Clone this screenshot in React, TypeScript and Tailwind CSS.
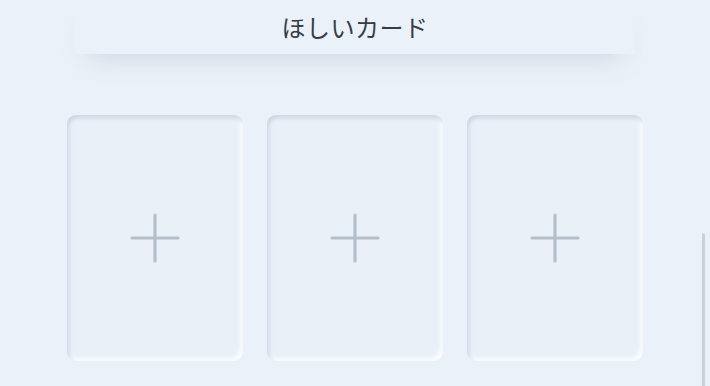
export default function App() {
  const slots = [0, 1, 2];
  return (
    <div className="relative h-[386px] w-[710px] overflow-hidden bg-[#ebf1f8] font-['Noto_Sans_CJK_JP',sans-serif]">
      <header className="mx-auto flex h-[54px] w-[560px] items-center justify-center bg-[#ebf1f8] shadow-[0_16px_26px_-14px_rgba(160,174,196,0.45)]">
        <h1 className="text-[24px] leading-none tracking-[0.5px] text-[#363c47]">ほしいカード</h1>
      </header>
      <div className="mt-[61px] flex justify-center gap-[24px]">
        {slots.map((i) => (
          <button
            key={i}
            className="flex h-[246px] w-[176px] items-center justify-center rounded-[9px] bg-[#eaf0f8] shadow-[inset_2px_3px_4px_rgba(170,182,200,0.45),inset_-3px_-3px_4px_rgba(255,255,255,0.85)]"
          >
            <svg width="50" height="50" viewBox="0 0 50 50" fill="none">
              <path d="M25 2v46M2 25h46" stroke="#b5bfcc" strokeWidth="3.2" strokeLinecap="round" />
            </svg>
          </button>
        ))}
      </div>
      <div className="absolute right-[5px] top-[233px] h-[160px] w-[3px] rounded-full bg-[#c9d1db]" />
    </div>
  );
}
